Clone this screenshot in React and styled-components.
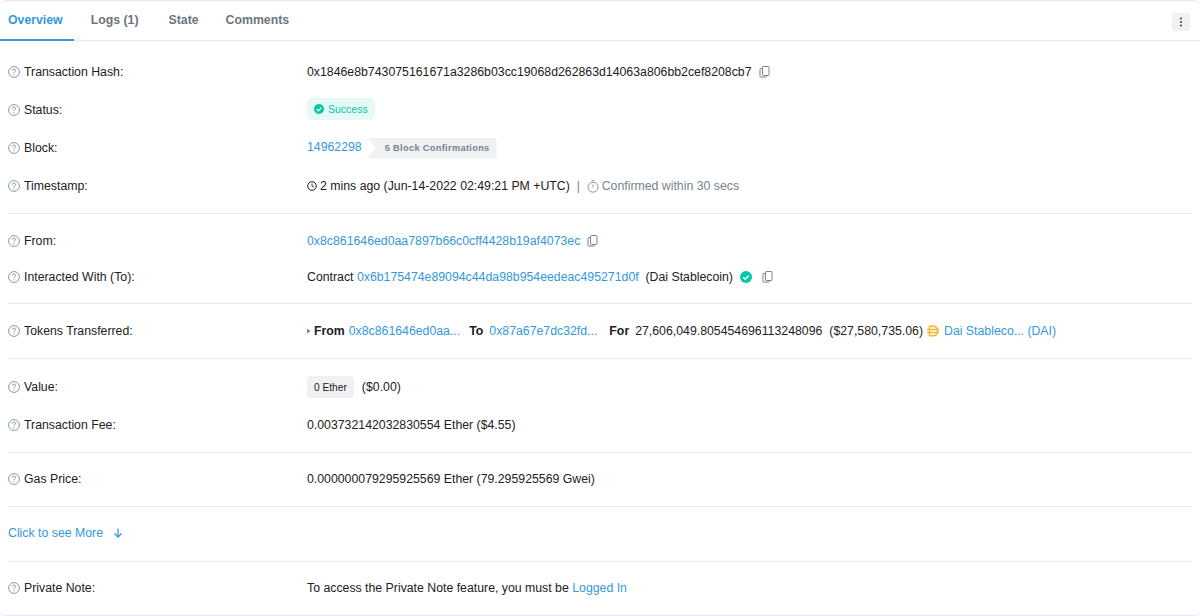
import React from "react";
import styled, { createGlobalStyle } from "styled-components";

const Global = createGlobalStyle`
  html, body { margin: 0; padding: 0; background: #fff; }
  body { font-family: "Liberation Sans", Arial, sans-serif; font-size: 12.3px; color: #1e2022; }
  * { box-sizing: border-box; }
`;
const Card = styled.div`
  width: 1200px; height: 616px; background: #fff;
  border: 1px solid #e7eaf3; border-width: 1px 0 1px 0; border-radius: 6px; overflow: hidden;
`;
const TabBar = styled.div`
  display: flex; align-items: stretch; justify-content: space-between; height: 40px;
  border-bottom: 1px solid #e7eaf3;
`;
const Tabs = styled.div`display: flex;`;
const Tab = styled.div`
  display: flex; align-items: center; height: 40px; padding: 0 ${p => p.$pr}px 1px ${p => p.$pl}px;
  font-weight: 700; font-size: 12.3px;
  color: ${p => p.$active ? "#3498db" : "#6c757e"};
  border-bottom: 2px solid ${p => p.$active ? "#3498db" : "transparent"};
`;
const MenuButton = styled.div`
  width: 18px; height: 18px; margin: 12px 10px 0 0; background: #eff1f3; border-radius: 3px;
  display: flex; align-items: center; justify-content: center;
`;
const Body = styled.div`padding: 0 8px;`;
const Section = styled.div`
  padding-top: ${p => p.$pt}px;
  height: ${p => p.$h}px;
  border-bottom: ${p => p.$last ? "none" : "1px solid #e7eaf3"};
`;
const Row = styled.div`display: flex; align-items: center; height: ${p => p.$h}px;`;
const Label = styled.div`
  width: 299px; flex: none; display: flex; align-items: center; gap: 4px; color: #1e2022;
`;
const Value = styled.div`display: flex; align-items: center; white-space: pre; color: #1e2022;`;
const Link = styled.span`color: #3498db; margin-left: ${p => p.$ml || 0}px; margin-right: ${p => p.$mr || 0}px;`;
const Bold = styled.b`font-weight: 700; color: #1e2022; margin-left: ${p => p.$ml || 0}px; margin-right: ${p => p.$mr || 0}px;`;
const Muted = styled.span`color: #77838f;`;
const Pill = styled.div`
  display: flex; align-items: center; gap: 4px; height: 22px; padding: 0 7px; margin-top: -2px;
  background: #e6f9f4; border-radius: 5px; color: #00c9a7; font-size: 10.5px;
`;
const BlockNo = styled(Link)`margin-top: -2px;`;
const Confirm = styled.div`
  height: 21px; display: flex; align-items: center; padding: 0 7px 0 17px; margin-left: 6px;
  background: #eff1f3; border-radius: 0 3px 3px 0; color: #77838f; font-size: 9.2px; font-weight: 700; letter-spacing: .35px;
  clip-path: polygon(0 0, 100% 0, 100% 100%, 0 100%, 8px 50%);
`;
const EtherTag = styled.div`
  height: 22px; display: flex; align-items: center; padding: 0 7px; background: #eff1f3; border-radius: 4px;
  font-size: 10.2px; margin-right: 8px;
`;
const Price = styled.span`margin-left: 7px;`;
const More = styled.div`display: flex; align-items: center; color: #3498db; gap: 10px;`;

const Help = () => (
  <svg width="12" height="12" viewBox="0 0 12 12" fill="none">
    <circle cx="6" cy="6" r="5.4" stroke="#8c98a4" strokeWidth="1" />
    <path d="M4.4 4.7c0-1 .7-1.6 1.6-1.6s1.6.6 1.6 1.4c0 1.2-1.6 1.2-1.6 2.6" stroke="#77838f" strokeWidth=".9" />
    <circle cx="6" cy="8.8" r=".6" fill="#77838f" />
  </svg>
);
const Copy = ({ ml }) => (
  <svg width="11" height="12" viewBox="0 0 11 12" fill="none" style={{ marginLeft: ml }}>
    <path d="M3.5 2.5H1.8c-.5 0-.8.3-.8.8v7c0 .5.3.8.8.8h5c.5 0 .8-.3.8-.8V9.5" stroke="#77838f" strokeWidth="1" />
    <rect x="3.5" y=".5" width="6.5" height="9" rx=".8" stroke="#77838f" strokeWidth="1" />
  </svg>
);
const Check = ({ size, color = "#00c9a7" }) => (
  <svg width={size} height={size} viewBox="0 0 12 12">
    <circle cx="6" cy="6" r="6" fill={color} />
    <path d="M3.2 6.2l2 2 3.6-3.8" fill="none" stroke="#fff" strokeWidth="1.5" />
  </svg>
);
const Clock = () => (
  <svg width="10" height="10" viewBox="0 0 10 10" fill="none" style={{ marginRight: 3 }}>
    <circle cx="5" cy="5" r="4.3" stroke="#1e2022" strokeWidth="1" />
    <path d="M5 2.5V5l1.8 1" stroke="#1e2022" strokeWidth=".9" />
  </svg>
);
const Stopwatch = () => (
  <svg width="12" height="13" viewBox="0 0 12 13" fill="none" style={{ marginRight: 3 }}>
    <circle cx="6" cy="7.2" r="5" stroke="#8c98a4" strokeWidth="1" />
    <path d="M6 4.4v3M4.6 .7h2.8" stroke="#8c98a4" strokeWidth="1" />
  </svg>
);
const Dai = () => (
  <svg width="12" height="12" viewBox="0 0 12 12" fill="none" style={{ margin: "0 5px 0 4px" }}>
    <path d="M2.5 1.2h3.6c2.6 0 4.4 2 4.4 4.8s-1.8 4.8-4.4 4.8H2.5z" stroke="#f4b731" strokeWidth="1.5" />
    <path d="M0 4.5h12M0 7.5h12" stroke="#f4b731" strokeWidth="1.3" />
  </svg>
);
const Dots = () => (
  <svg width="4" height="10" viewBox="0 0 4 10" fill="#4a4f55">
    <circle cx="2" cy="1.5" r="1.1" /><circle cx="2" cy="5" r="1.1" /><circle cx="2" cy="8.5" r="1.1" />
  </svg>
);
const Caret = () => (
  <svg width="4" height="6" viewBox="0 0 4 6" style={{ marginRight: 3 }}><path d="M0 .5L3.5 3 0 5.5z" fill="#77838f" /></svg>
);
const ArrowDown = () => (
  <svg width="10" height="10" viewBox="0 0 10 10" fill="none" stroke="#3498db" strokeWidth="1.3">
    <path d="M5 .5v8.5M1.5 5.5L5 9l3.5-3.5" />
  </svg>
);

const Field = ({ label, h, children }) => (
  <Row $h={h}>
    <Label><Help />{label}</Label>
    <Value>{children}</Value>
  </Row>
);

export default function App() {
  return (
    <Card>
      <Global />
      <TabBar>
        <Tabs>
          <Tab $active $pl={8} $pr={11}>Overview</Tab>
          <Tab $pl={17} $pr={15}>Logs (1)</Tab>
          <Tab $pl={15} $pr={13}>State</Tab>
          <Tab $pl={14} $pr={10}>Comments</Tab>
        </Tabs>
        <MenuButton><Dots /></MenuButton>
      </TabBar>
      <Body>
        <Section $h={173} $pt={12}>
          <Field label="Transaction Hash:" h={38}>
            0x1846e8b743075161671a3286b03cc19068d262863d14063a806bb2cef8208cb7<Copy ml={7} />
          </Field>
          <Field label="Status:" h={38}>
            <Pill><Check size={10} />Success</Pill>
          </Field>
          <Field label="Block:" h={38}>
            <BlockNo>14962298</BlockNo><Confirm>5 Block Confirmations</Confirm>
          </Field>
          <Field label="Timestamp:" h={38}>
            <Clock />2 mins ago (Jun-14-2022 02:49:21 PM +UTC)<Muted>  |  </Muted><Stopwatch /><Muted>Confirmed within 30 secs</Muted>
          </Field>
        </Section>
        <Section $h={90} $pt={9}>
          <Field label="From:" h={36}>
            <Link>0x8c861646ed0aa7897b66c0cff4428b19af4073ec</Link><Copy ml={7} />
          </Field>
          <Field label="Interacted With (To):" h={36}>
            Contract <Link>0x6b175474e89094c44da98b954eedeac495271d0f</Link>  (Dai Stablecoin)  <Check size={12} /><Copy ml={10} />
          </Field>
        </Section>
        <Section $h={55} $pt={9}>
          <Field label="Tokens Transferred:" h={36}>
            <Caret /><Bold>From</Bold><Link $ml={4}>0x8c861646ed0aa...</Link><Bold $ml={9}>To</Bold><Link $ml={6}>0x87a67e7dc32fd...</Link><Bold $ml={12} $mr={6}>For</Bold>27,606,049.805454696113248096<Price>($27,580,735.06)</Price><Dai /><Link>Dai Stableco... (DAI)</Link>
          </Field>
        </Section>
        <Section $h={94} $pt={9}>
          <Field label="Value:" h={38}>
            <EtherTag>0 Ether</EtherTag>($0.00)
          </Field>
          <Field label="Transaction Fee:" h={38}>
            0.003732142032830554 Ether ($4.55)
          </Field>
        </Section>
        <Section $h={54} $pt={8}>
          <Field label="Gas Price:" h={36}>
            0.000000079295925569 Ether (79.295925569 Gwei)
          </Field>
        </Section>
        <Section $h={55} $pt={8}>
          <Row $h={36}><More>Click to see More<ArrowDown /></More></Row>
        </Section>
        <Section $last $h={54} $pt={8}>
          <Field label="Private Note:" h={36}>
            To access the Private Note feature, you must be <Link>Logged In</Link>
          </Field>
        </Section>
      </Body>
    </Card>
  );
}
